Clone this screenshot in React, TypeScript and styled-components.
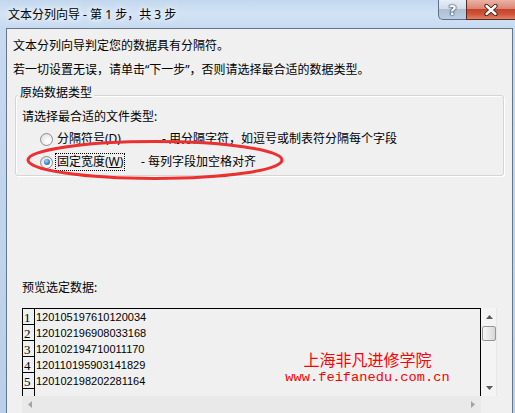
import React from "react";
import styled, { createGlobalStyle } from "styled-components";

const GlobalStyle = createGlobalStyle`
  html, body { margin: 0; padding: 0; }
  body {
    font-family: "Noto Sans", "Noto Sans CJK SC", sans-serif;
    font-size: 12px;
    color: #000;
    background: #bcd2ea;
  }
`;

const Window = styled.div`
  width: 515px;
  height: 413px;
  overflow: hidden;
  display: flex;
  flex-direction: column;
  background: linear-gradient(to bottom, #c2d7ee 0px, #d3e3f5 14px, #c6daf0 28px, #b9d0ea 100%);
`;

const TitleBar = styled.div`
  height: 28px;
  display: flex;
  align-items: flex-start;
  flex-shrink: 0;
`;

const Title = styled.div`
  flex: 1;
  padding: 7px 0 0 8px;
  line-height: 16px;
  font-size: 12px;
  text-shadow: 0 0 6px rgba(255, 255, 255, 0.95), 0 0 10px rgba(255, 255, 255, 0.8);
`;

const Caption = styled.div`
  display: flex;
`;

const HelpButton = styled.div`
  width: 28px;
  height: 20px;
  box-sizing: border-box;
  border: 1px solid #5f6f86;
  border-top: none;
  border-right: none;
  border-radius: 0 0 0 5px;
  background: linear-gradient(to bottom, #e6eef7 0%, #d3deeb 45%, #aebfd5 50%, #bccde2 100%);
  display: flex;
  align-items: center;
  justify-content: center;
  color: #fff;
  font-family: "DejaVu Sans", sans-serif;
  font-weight: bold;
  font-size: 14px;
  line-height: 1;
  text-shadow: 0 0 1px #2c3a4e, 0 0 1px #2c3a4e, 0 0 2px #2c3a4e;
`;

const CloseButton = styled.div`
  width: 49px;
  height: 20px;
  box-sizing: border-box;
  border: 1px solid #5a2a22;
  border-top: none;
  border-right: none;
  background: linear-gradient(to bottom, #eab3a5 0%, #dc8674 45%, #c5432b 50%, #cf5538 75%, #e08466 100%);
  display: flex;
  align-items: center;
  justify-content: center;
`;

const Client = styled.div`
  flex: 1;
  margin: 0 2px 0 6px;
  border: 1px solid #65758a;
  border-bottom: none;
  background: #f0f0f0;
  display: flex;
  flex-direction: column;
  padding-top: 9px;
`;

const Intro = styled.div`
  line-height: 16px;
  padding-left: 6px;
  & + & { margin-top: 8px; }
`;

const GroupBox = styled.div`
  position: relative;
  margin: 17px 8px 0 8px;
  border: 1px solid #d5d5d5;
  border-radius: 3px;
  box-shadow: 1px 1px 0 #ffffff, inset 1px 1px 0 #ffffff;
  display: flex;
  flex-direction: column;
  padding-bottom: 4px;
`;

const Legend = styled.div`
  align-self: flex-start;
  margin: -11px 0 0 2px;
  padding: 0 2px;
  background: #f0f0f0;
  line-height: 16px;
`;

const Prompt = styled.div`
  margin: 8px 0 0 6px;
  line-height: 16px;
`;

const RadioRow = styled.div<{ $slot: number }>`
  display: grid;
  grid-template-columns: 13px ${(p) => p.$slot}px auto;
  align-items: center;
  height: 18px;
  margin-top: 5px;
  padding-left: 24px;
`;

const Radio = styled.span<{ $checked?: boolean }>`
  position: relative;
  width: 13px;
  height: 13px;
  box-sizing: border-box;
  border-radius: 50%;
  border: 1px solid #8d8d8d;
  background: radial-gradient(circle at 65% 65%, #ffffff 0%, #f2f2f2 40%, #d4d4d4 100%);
  &::after {
    content: "";
    display: ${(p) => (p.$checked ? "block" : "none")};
    position: absolute;
    left: 2.5px;
    top: 2.5px;
    width: 6px;
    height: 6px;
    border-radius: 50%;
    background: radial-gradient(circle at 40% 35%, #a6d8f8 0%, #4b94d2 45%, #1c4f8c 100%);
  }
`;

const LabelSlot = styled.div`
  display: flex;
  padding-left: 2px;
`;

const RadioLabel = styled.span<{ $focused?: boolean }>`
  padding: 0 1px;
  line-height: 16px;
  border: 1px dotted ${(p) => (p.$focused ? "#000" : "transparent")};
  white-space: nowrap;
`;

const Mnemonic = styled.span`
  text-decoration: underline;
`;

const Desc = styled.span`
  line-height: 16px;
  white-space: nowrap;
`;

const Annotation = styled.svg`
  position: absolute;
  left: 9px;
  top: 43px;
  pointer-events: none;
  overflow: visible;
`;

const PreviewLabel = styled.div`
  margin: 104px 0 0 15px;
  line-height: 16px;
`;

const Preview = styled.div`
  margin: 12px 0 0 15px;
  width: 476px;
  display: flex;
  flex-direction: column;
`;

const PreviewMain = styled.div`
  display: flex;
  height: 88px;
`;

const DataArea = styled.div`
  position: relative;
  width: 459px;
  box-sizing: border-box;
  border-top: 1px solid #000;
  border-right: 1px solid #000;
  overflow: hidden;
  background: #f0f0f0;
`;

const Row = styled.div`
  display: flex;
  height: 16px;
`;

const NumCell = styled.div`
  width: 13px;
  box-sizing: border-box;
  border-left: 1px solid #000;
  border-right: 1px solid #000;
  border-bottom: 1px solid #000;
  font-family: "Liberation Serif", serif;
  font-size: 13px;
  line-height: 13px;
  display: flex;
  align-items: flex-end;
  padding-left: 1px;
`;

const DataText = styled.div`
  font-family: "Liberation Sans", Arial, sans-serif;
  font-size: 11px;
  line-height: 16px;
  padding-left: 1px;
`;

const Watermark = styled.div`
  position: absolute;
  left: 263px;
  top: 42px;
  width: 165px;
  display: flex;
  flex-direction: column;
  align-items: center;
  color: #ff0000;
  pointer-events: none;
`;

const WatermarkTitle = styled.div`
  font-family: "Noto Sans CJK SC", sans-serif;
  font-size: 16px;
  line-height: 16px;
`;

const WatermarkUrl = styled.div`
  margin-top: 3px;
  font-family: "Liberation Mono", monospace;
  font-size: 13.7px;
  line-height: 16px;
`;

const VScroll = styled.div`
  width: 16px;
  display: flex;
  flex-direction: column;
  align-items: center;
  background: #f4f4f4;
  box-shadow: inset -1px 0 0 #e6e6e6;
`;

const ArrowBox = styled.div`
  height: 17px;
  width: 100%;
  display: flex;
  align-items: center;
  justify-content: center;
  flex-shrink: 0;
`;

const Thumb = styled.div`
  margin-top: 1px;
  width: 14px;
  height: 15px;
  box-sizing: border-box;
  border: 1px solid #979797;
  border-radius: 2px;
  background: linear-gradient(to right, #f6f6f6 0%, #e8e8e8 50%, #d6d6d6 100%);
`;

const Spacer = styled.div`
  flex: 1;
`;

const HScroll = styled.div`
  width: 459px;
  height: 17px;
  box-sizing: border-box;
  background: #e9e9e9;
  display: flex;
  align-items: center;
  justify-content: space-between;
  padding: 0 6px 0 6px;
`;

const Tri = ({ dir }: { dir: "up" | "down" | "left" | "right" }) => {
  const pts = {
    up: "0,4 3.5,0 7,4",
    down: "0,0 7,0 3.5,4",
    left: "4,0 4,7 0,3.5",
    right: "0,0 0,7 4,3.5",
  }[dir];
  const vertical = dir === "up" || dir === "down";
  return (
    <svg width={vertical ? 7 : 4} height={vertical ? 4 : 7} viewBox={vertical ? "0 0 7 4" : "0 0 4 7"}>
      <polygon points={pts} fill={vertical ? "#5a5a5a" : "#a4a4a4"} />
    </svg>
  );
};

const rows = [
  "120105197610120034",
  "120102196908033168",
  "120102194710011170",
  "120110195903141829",
  "120102198202281164",
  "",
];

export default function App() {
  return (
    <>
      <GlobalStyle />
      <Window>
        <TitleBar>
          <Title>文本分列向导 - 第 1 步，共 3 步</Title>
          <Caption>
            <HelpButton>?</HelpButton>
            <CloseButton>
              <svg width="14" height="12" viewBox="0 0 14 12">
                <path d="M2.5 2 L11.5 10 M11.5 2 L2.5 10" stroke="#3a1a16" strokeWidth="4.2" strokeLinecap="round" />
                <path d="M2.5 2 L11.5 10 M11.5 2 L2.5 10" stroke="#ffffff" strokeWidth="2.4" strokeLinecap="round" />
              </svg>
            </CloseButton>
          </Caption>
        </TitleBar>
        <Client>
          <Intro>文本分列向导判定您的数据具有分隔符。</Intro>
          <Intro>若一切设置无误，请单击“下一步”，否则请选择最合适的数据类型。</Intro>
          <GroupBox>
            <Legend>原始数据类型</Legend>
            <Prompt>请选择最合适的文件类型:</Prompt>
            <RadioRow $slot={109}>
              <Radio />
              <LabelSlot>
                <RadioLabel>分隔符号(D)</RadioLabel>
              </LabelSlot>
              <Desc>- 用分隔字符，如逗号或制表符分隔每个字段</Desc>
            </RadioRow>
            <RadioRow $slot={88}>
              <Radio $checked />
              <LabelSlot>
                <RadioLabel $focused>
                  固定宽度(<Mnemonic>W</Mnemonic>)
                </RadioLabel>
              </LabelSlot>
              <Desc>- 每列字段加空格对齐</Desc>
            </RadioRow>
            <Annotation width="260" height="43" viewBox="0 0 260 43">
              <ellipse cx="130" cy="21" rx="127" ry="18.5" fill="none" stroke="#ec2f2f" strokeWidth="3" />
            </Annotation>
          </GroupBox>
          <PreviewLabel>预览选定数据:</PreviewLabel>
          <Preview>
            <PreviewMain>
              <DataArea>
                {rows.map((r, i) => (
                  <Row key={i}>
                    <NumCell>{r ? i + 1 : ""}</NumCell>
                    <DataText>{r}</DataText>
                  </Row>
                ))}
                <Watermark>
                  <WatermarkTitle>上海非凡进修学院</WatermarkTitle>
                  <WatermarkUrl>www.feifanedu.com.cn</WatermarkUrl>
                </Watermark>
              </DataArea>
              <VScroll>
                <ArrowBox>
                  <Tri dir="up" />
                </ArrowBox>
                <Thumb />
                <Spacer />
                <ArrowBox>
                  <Tri dir="down" />
                </ArrowBox>
              </VScroll>
            </PreviewMain>
            <HScroll>
              <Tri dir="left" />
              <Tri dir="right" />
            </HScroll>
          </Preview>
        </Client>
      </Window>
    </>
  );
}
